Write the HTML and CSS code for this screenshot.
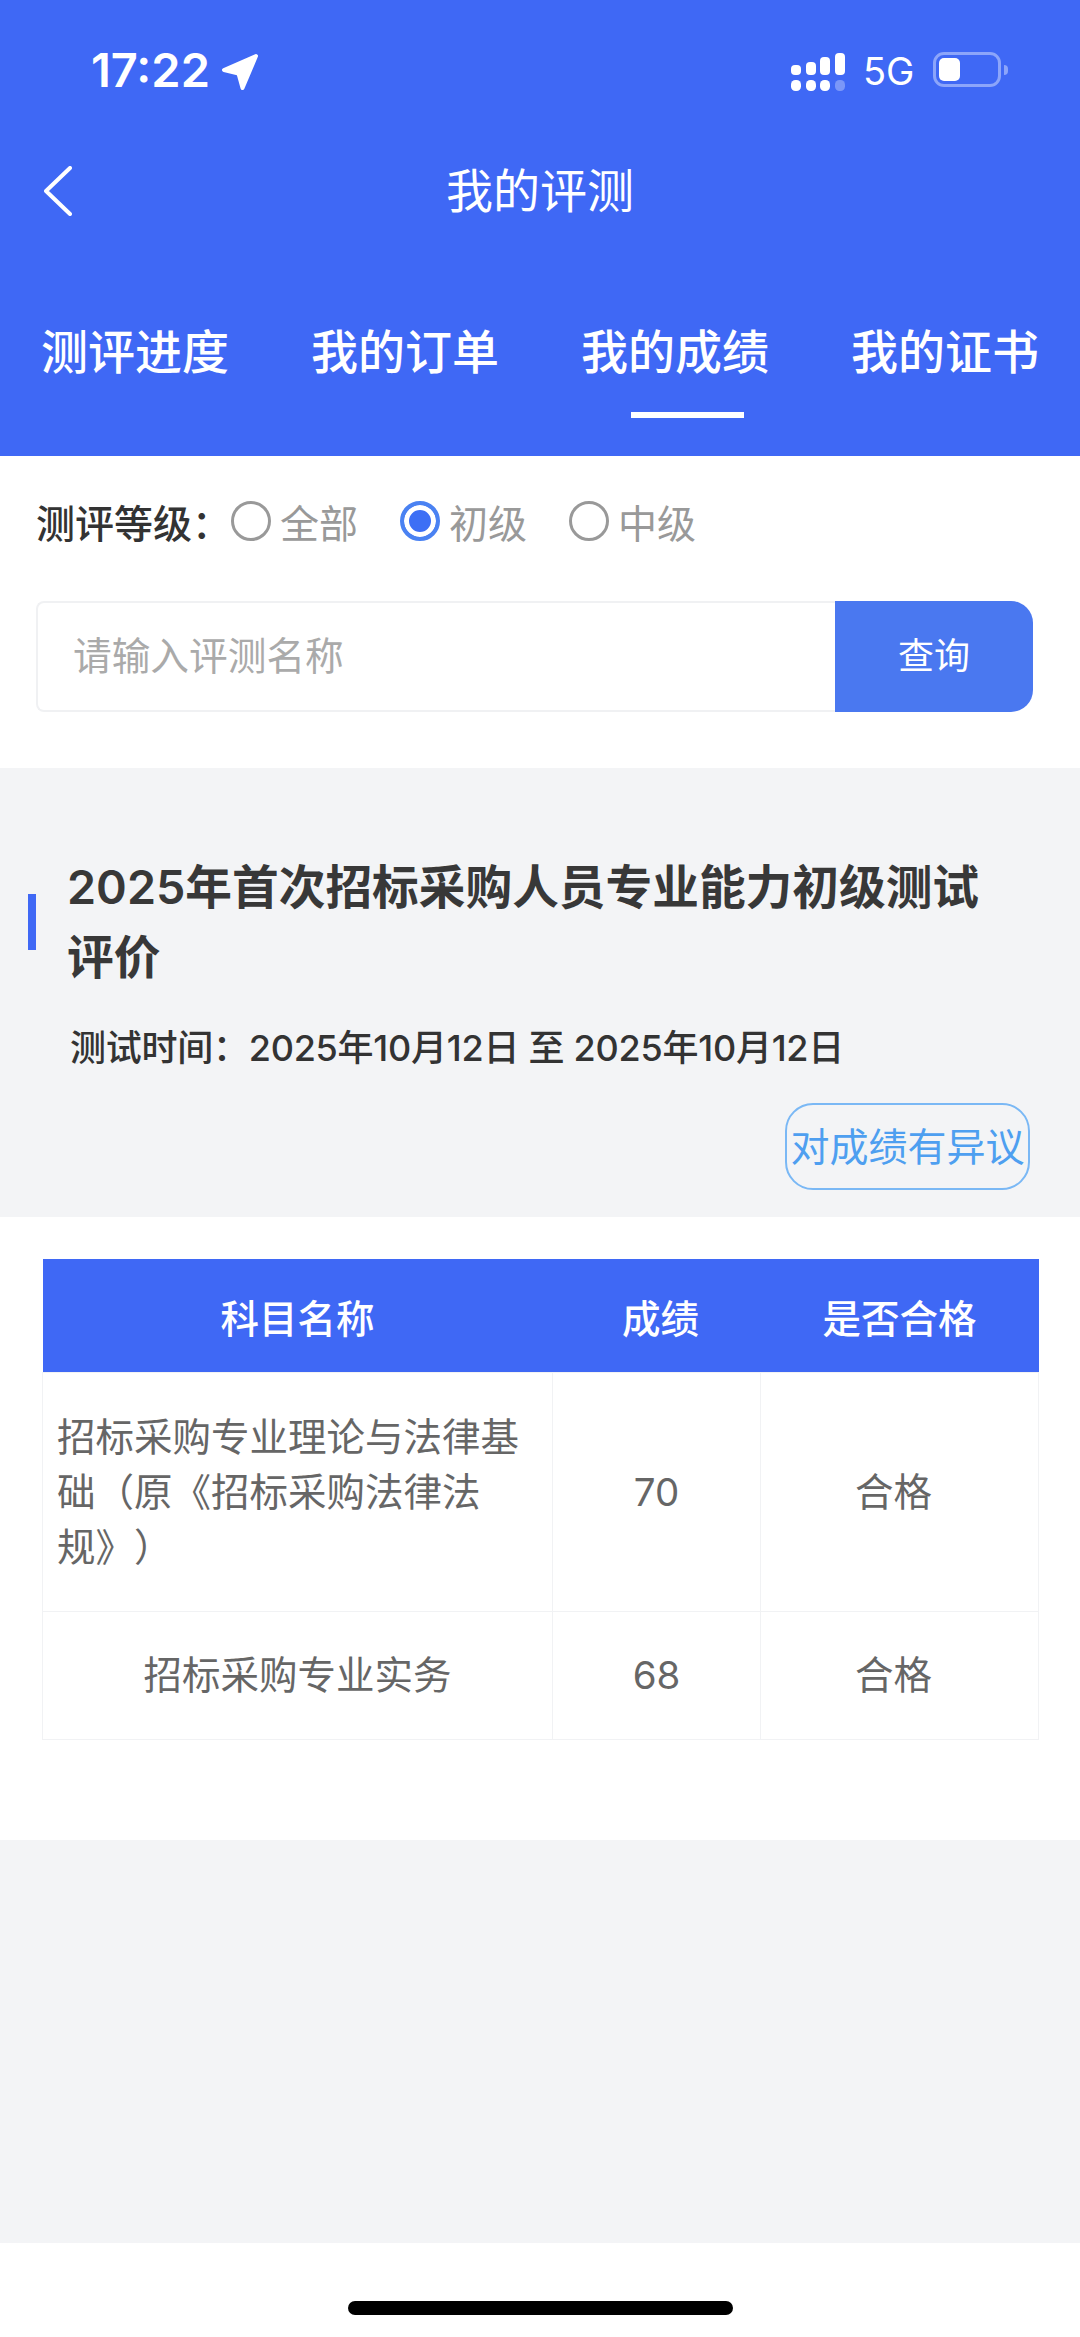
FILE: index.html
```html
<!DOCTYPE HTML>
<html>
<head>
  <meta name="viewport" content="width=device-width, initial-scale=1">
  <link rel="icon" href="data:,">
  <link rel="stylesheet" href="styles.css">
</head>
<body>
  <header class="top">
    <div class="status">
      <div class="status-time">
        <span>17:22</span>
        <svg class="loc" width="38" height="38" viewBox="0 0 38 38"><path d="M35 3 L3 17 L17.5 20.5 L21.5 35 Z" fill="#fff" stroke="#fff" stroke-width="4" stroke-linejoin="round"/></svg>
      </div>
      <div class="status-right">
        <svg class="signal" width="54" height="38" viewBox="0 0 54 38">
          <rect x="0" y="12" width="10" height="10" rx="4" fill="#fff"/>
          <rect x="15" y="9" width="10" height="13" rx="4" fill="#fff"/>
          <rect x="29" y="4" width="10" height="18" rx="4" fill="#fff"/>
          <rect x="44" y="0" width="10" height="22" rx="4" fill="#fff"/>
          <rect x="0" y="27" width="10" height="11" rx="4.5" fill="#fff"/>
          <rect x="15" y="27" width="10" height="11" rx="4.5" fill="#fff"/>
          <rect x="29" y="27" width="10" height="11" rx="4.5" fill="#fff"/>
          <rect x="44" y="27" width="10" height="11" rx="4.5" fill="#7b97f8"/>
        </svg>
        <span class="net">5G</span>
        <div class="battery"><div class="battery-fill"></div></div>
        <div class="battery-nub"></div>
      </div>
    </div>
    <div class="nav">
      <svg class="back" width="28" height="50" viewBox="0 0 28 50"><path d="M26 2 L2 25 L26 48" fill="none" stroke="#fff" stroke-width="4" stroke-linecap="round" stroke-linejoin="round"/></svg>
      <div class="nav-title">我的评测</div>
    </div>
    <div class="tabs">
      <div class="tab">测评进度</div>
      <div class="tab">我的订单</div>
      <div class="tab active">我的成绩</div>
      <div class="tab">我的证书</div>
    </div>
  </header>

  <section class="filter">
    <div class="levels">
      <span class="levels-label">测评等级：</span>
      <span class="radio"></span><span class="radio-text">全部</span>
      <span class="radio on"></span><span class="radio-text">初级</span>
      <span class="radio"></span><span class="radio-text">中级</span>
    </div>
    <div class="search">
      <div class="search-input">请输入评测名称</div>
      <div class="search-btn">查询</div>
    </div>
  </section>

  <section class="exam">
    <div class="exam-head">
      <div class="exam-bar"></div>
      <h2 class="exam-title">2025年首次招标采购人员专业能力初级测试评价</h2>
    </div>
    <p class="exam-time">测试时间：2025年10月12日 至 2025年10月12日</p>
    <div class="exam-actions"><span class="objection">对成绩有异议</span></div>
  </section>

  <section class="result">
    <table class="scores">
      <colgroup><col class="col-name"><col class="col-score"><col class="col-pass"></colgroup>
      <thead>
        <tr><th>科目名称</th><th class="th-score">成绩</th><th>是否合格</th></tr>
      </thead>
      <tbody>
        <tr class="row-tall"><td class="name-left">招标采购专业理论与法律基础（原《招标采购法律法规》）</td><td>70</td><td class="td-pass">合格</td></tr>
        <tr class="row-short"><td>招标采购专业实务</td><td>68</td><td class="td-pass">合格</td></tr>
      </tbody>
    </table>
  </section>

  <div class="rest"></div>
  <div class="home"><div class="home-bar"></div></div>
</body>
</html>
```
FILE: styles.css
```css
html {background: #fff;}
body {margin: 0; width: 1080px; height: 2337px; overflow: hidden; font-family: Inter, "Noto Sans CJK SC", sans-serif; color: #333; text-spacing-trim: space-all;}

.top {background: #3f68f5; color: #fff; height: 456px;}
.status {display: flex; justify-content: space-between; height: 140px; padding: 52px 72px 0 91px; box-sizing: border-box;}
.status-time {display: flex; align-items: flex-start; gap: 11px; font-size: 47px; font-weight: 600; line-height: 36px;}
.status-time .loc {margin-top: 1px;}
.status-right {display: flex; align-items: flex-start;}
.signal {margin-top: 1px;}
.net {font-size: 38px; line-height: 36px; margin: 1px 20px 0 18px; width: 50px;}
.battery {width: 68px; height: 35px; box-sizing: border-box; border: 3px solid #8ca5fa; border-radius: 11px; padding: 3px;}
.battery-fill {width: 21px; height: 23px; background: #fff; border-radius: 5px;}
.battery-nub {width: 4px; height: 10px; margin: 13px 0 0 3px; background: #8ca5fa; border-radius: 0 4px 4px 0;}

.nav {position: relative; display: flex; justify-content: center; align-items: center; height: 102px;}
.back {position: absolute; left: 44px; top: 26px;}
.nav-title {font-size: 47px; line-height: 60px;}

.tabs {display: flex; justify-content: space-between; padding: 80px 41px 0 41px;}
.tab {font-size: 47px; line-height: 60px; font-weight: 500; width: 188px; white-space: nowrap;}
.tab.active:after {content: ""; display: block; width: 113px; height: 6px; margin: 30px 0 0 50px; background: #fff;}

.filter {height: 312px; box-sizing: border-box; padding: 38px 47px 0 36px;}
.levels {display: flex; align-items: center; height: 54px; font-size: 39px; color: #999;}
.levels-label {width: 195px; color: #333; font-weight: 500; white-space: nowrap;}
.radio {width: 40px; height: 40px; box-sizing: border-box; border: 3px solid #999; border-radius: 50%; margin-right: 9px;}
.radio.on {border: 4px solid #4a82f2; background: #3d6ff5; box-shadow: inset 0 0 0 5px #fff;}
.radio-text {width: 78px; margin-right: 42px; white-space: nowrap;}
.search {display: flex; height: 111px; margin-top: 53px;}
.search-input {flex: 1; box-sizing: border-box; border: 2px solid #f0f1f3; border-right: none; border-radius: 8px 0 0 8px; padding-left: 35px; font-size: 38.7px; line-height: 107px; color: #aaa;}
.search-btn {width: 198px; background: #4a78f0; color: #fff; border-radius: 0 22px 22px 0; font-size: 36px; line-height: 111px; text-align: center;}

.exam {height: 449px; box-sizing: border-box; background: #f3f4f6; padding: 84px 50px 0 28px;}
.exam-head {display: flex; align-items: center;}
.exam-bar {flex: none; width: 8px; height: 56px; margin-right: 31px; background: #3f68f5;}
.exam-title {margin: 0; font-size: 46.7px; line-height: 70px; font-weight: 600; color: #383838; width: 930px;}
.exam-time {margin: 31px 0 0 42px; font-size: 36px; line-height: 50px; font-weight: 500; color: #333; letter-spacing: -0.25px;}
.exam-actions {display: flex; justify-content: flex-end; margin-top: 30px;}
.objection {width: 245px; height: 87px; box-sizing: border-box; border: 2px solid #7ab8f5; border-radius: 28px; font-size: 39px; line-height: 83px; text-align: center; color: #4e9ff0; white-space: nowrap;}

.result {height: 623px; box-sizing: border-box; padding: 42px 42px 0 42px;}
.scores {border-collapse: collapse; table-layout: fixed; width: 996px; font-size: 38.5px; color: #666;}
.col-name {width: 510px;}
.col-score {width: 208px;}
.col-pass {width: 278px;}
.scores th {height: 113px; padding: 0; background: #3f68f5; color: #fff; font-weight: 500;}
.scores th.th-score {padding-left: 8px;}
.scores td {padding: 0 14px; border: 1px solid #f1f2f4; line-height: 55px; text-align: center;}
.scores td.name-left {text-align: left;}
.scores td.td-pass {padding-right: 26px;}
.row-tall {height: 239px;}
.row-short {height: 128px;}

.rest {height: 403px; background: #f3f4f6;}
.home {height: 94px; display: flex; justify-content: center; padding-top: 58px; box-sizing: border-box;}
.home-bar {width: 385px; height: 14px; background: #000; border-radius: 7px;}
```
